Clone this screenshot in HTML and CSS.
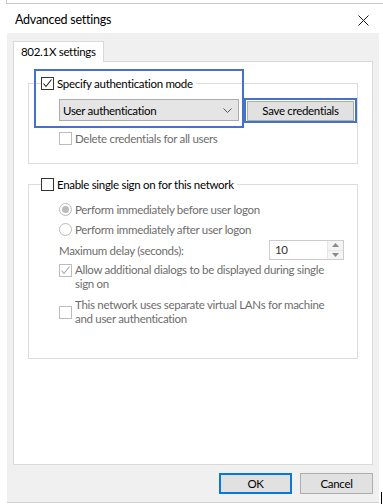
FILE: index.html
```html
<!DOCTYPE html>
<html lang="en">
<head>
<meta charset="utf-8">
<title>Advanced settings</title>
<link rel="stylesheet" href="styles.css">
</head>
<body>
<div class="strip"></div>
<div class="dialog">
  <div class="titlebar">
    <span class="title">Advanced settings</span>
    <svg class="close" width="11" height="11" viewBox="0 0 11 11"><path d="M0.5 0.5L10.5 10.5M10.5 0.5L0.5 10.5" stroke="#1a1a1a" stroke-width="1" fill="none"/></svg>
  </div>
  <div class="body">
    <div class="tabs"><div class="tab">802.1X settings</div></div>
    <div class="panel">
      <fieldset class="group g1">
        <legend><span class="legend-in"><span class="cb"><svg width="11" height="11" viewBox="0 0 11 11"><path d="M1.5 5.5L4 8.5L9.5 1.5" stroke="#222" stroke-width="1.1" fill="none"/></svg></span>Specify authentication mode</span></legend>
        <div class="content">
          <div class="mode-row">
            <div class="select"><span>User authentication</span><svg width="9" height="5" viewBox="0 0 9 5"><path d="M0.5 0.5L4.5 4.5L8.5 0.5" stroke="#555" stroke-width="1" fill="none"/></svg></div>
            <div class="btn save">Save credentials</div>
          </div>
          <div class="opt dis delete-row"><span class="cb"></span>Delete credentials for all users</div>
        </div>
      </fieldset>
      <fieldset class="group g2">
        <legend><span class="legend-in"><span class="cb"></span>Enable single sign on for this network</span></legend>
        <div class="content">
          <div class="opt dis radio-row r1"><span class="rb on"></span>Perform immediately before user logon</div>
          <div class="opt dis radio-row r2"><span class="rb"></span>Perform immediately after user logon</div>
          <div class="delay-row dis">
            <span>Maximum delay (seconds):</span>
            <div class="spin"><span class="spin-val">10</span><span class="spin-btns"><span class="sb"><svg width="7" height="4" viewBox="0 0 7 4"><path d="M0 4L3.5 0L7 4Z" fill="#8a8a8a"/></svg></span><span class="sb"><svg width="7" height="4" viewBox="0 0 7 4"><path d="M0 0L3.5 4L7 0Z" fill="#8a8a8a"/></svg></span></span></div>
          </div>
          <div class="opt dis multi allow-row"><span class="cb"><svg width="11" height="11" viewBox="0 0 11 11"><path d="M1.5 5.5L4 8.5L9.5 1.5" stroke="#a8a8a8" stroke-width="1.1" fill="none"/></svg></span><span>Allow additional dialogs to be displayed during single<br>sign on</span></div>
          <div class="opt dis multi center lan-row"><span class="cb"></span><span>This network uses separate virtual LANs for machine<br>and user authentication</span></div>
        </div>
      </fieldset>
    </div>
    <div class="footer">
      <div class="btn ok">OK</div>
      <div class="btn">Cancel</div>
    </div>
  </div>
</div>
<div class="hl hl1"></div>
<div class="hl hl2"></div>
<div class="caret"></div>
</body>
</html>
```

FILE: styles.css
```css
* { box-sizing: border-box; }
html, body { margin: 0; padding: 0; }
body {
  width: 383px;
  height: 504px;
  background: #fff;
  font-family: Lato, "Noto Sans", sans-serif;
  font-size: 11.5px;
  letter-spacing: -0.3px;
  color: #000;
  position: relative;
  overflow: hidden;
  white-space: nowrap;
}
.strip {
  margin-left: 6px;
  height: 4px;
  border-left: 1px solid #c8c8c8;
  border-bottom: 1px solid #c8c8c8;
}
.dialog {
  margin-left: 7px;
  width: 372px;
  height: 499px;
  background: #f0f0f0;
  border-bottom: 1px solid #d2d2d2;
  display: flex;
  flex-direction: column;
}
.titlebar {
  height: 29px;
  background: #fff;
  display: flex;
  align-items: center;
  justify-content: space-between;
  padding: 2px 10px 0 8px;
}
.title { font-size: 12.5px; letter-spacing: -0.25px; }
.close { display: block; margin-top: 1px; }
.body {
  flex: 1;
  padding: 8px 7px 0 6px;
  display: flex;
  flex-direction: column;
}
.tabs { display: flex; }
.tab {
  width: 91px;
  height: 21px;
  background: #fff;
  border: 1px solid #d9d9d9;
  border-bottom: none;
  margin-bottom: -1px;
  position: relative;
  z-index: 1;
  padding-left: 7px;
  line-height: 20px;
}
.panel {
  width: 360px;
  height: 404px;
  background: #fff;
  border: 1px solid #d9d9d9;
  padding: 14px 0 0 14px;
}
.group {
  margin: 0;
  width: 330px;
  min-width: 0;
  border: 1px solid #dcdcdc;
  padding: 0 0 0 12px;
}
.group legend {
  padding: 0 3px 0 0;
  margin: 0;
}
.legend-in {
  display: flex;
  align-items: center;
  gap: 3px;
  height: 15px;
  line-height: 15px;
}
.cb {
  width: 13px;
  height: 13px;
  flex: none;
  border: 1px solid #333;
  background: #fff;
  display: flex;
  align-items: center;
  justify-content: center;
}
.cb svg { display: block; }
.dis { color: #6d6d6d; }
.dis .cb { border-color: #bcbcbc; }
.rb {
  width: 13px;
  height: 13px;
  flex: none;
  border: 1px solid #bcbcbc;
  border-radius: 50%;
  background: #fff;
  display: flex;
  align-items: center;
  justify-content: center;
}
.rb.on::after {
  content: "";
  width: 7px;
  height: 7px;
  border-radius: 50%;
  background: #bcbcbc;
}
.content { padding-left: 18px; }
.g1 .content { padding-top: 8px; padding-bottom: 17px; }
.mode-row {
  display: flex;
  align-items: center;
  gap: 8px;
}
.select {
  width: 180px;
  height: 22px;
  background: #e5e5e5;
  border: 1px solid #acacac;
  display: flex;
  align-items: center;
  justify-content: space-between;
  padding: 0 6px 0 3px;
}
.btn {
  background: #e1e1e1;
  border: 1px solid #adadad;
  display: flex;
  align-items: center;
  justify-content: center;
}
.save { width: 107px; height: 20px; margin-top: 1px; }
.opt {
  display: flex;
  align-items: center;
  gap: 3px;
  line-height: 15px;
}
.delete-row { margin-top: 10px; }
.g2 { margin-top: 13px; }
.g2 .content { padding-top: 10px; padding-bottom: 32px; }
.r2 { margin-top: 5px; }
.delay-row {
  margin-top: 3px;
  width: 285px;
  height: 20px;
  display: flex;
  align-items: center;
  justify-content: space-between;
}
.spin {
  width: 75px;
  height: 20px;
  border: 1px solid #cccccc;
  background: #fff;
  display: flex;
  justify-content: space-between;
}
.spin-val { padding-left: 5px; line-height: 18px; color: #333; }
.spin-btns {
  width: 16px;
  display: flex;
  flex-direction: column;
  border-left: 1px solid #e6e6e6;
}
.sb {
  flex: 1;
  display: flex;
  align-items: center;
  justify-content: center;
  background: #f4f4f4;
}
.sb + .sb { border-top: 1px solid #e6e6e6; }
.multi { align-items: flex-start; line-height: 14px; }
.multi .cb { margin-top: 1px; }
.multi.center { align-items: center; }
.multi.center .cb { margin-top: 0; }
.allow-row { margin-top: 3px; }
.lan-row { margin-top: 7px; }
.footer {
  margin-top: 8px;
  margin-right: -1px;
  display: flex;
  justify-content: flex-end;
  gap: 8px;
}
.footer .btn { width: 73px; height: 21px; }
.footer .ok { border: 2px solid #0a78d7; }
.hl {
  position: absolute;
  border: 2px solid #4472c4;
}
.hl1 { left: 34px; top: 69px; width: 210px; height: 59px; }
.hl2 { left: 244px; top: 98px; width: 113px; height: 25px; }
.caret {
  position: absolute;
  left: 381px;
  top: 492px;
  width: 1px;
  height: 12px;
  background: #000;
}
```
